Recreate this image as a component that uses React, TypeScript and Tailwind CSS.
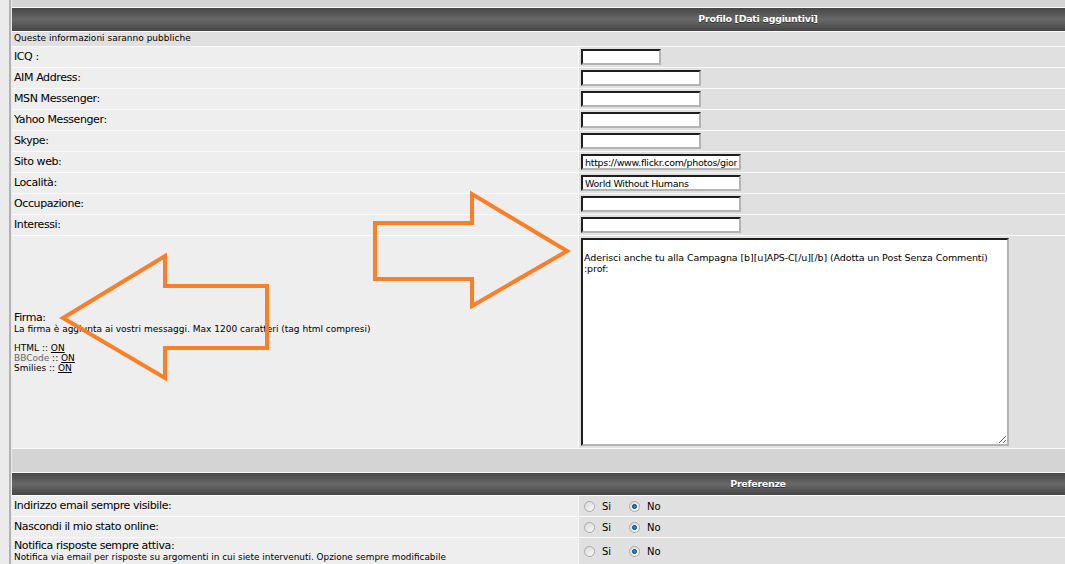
import React from "react";

const font = "font-['DejaVu_Sans','Liberation_Sans',sans-serif]";

const Header = ({ title, h }: { title: string; h: string }) => (
  <div
    className={`flex ${h} items-center justify-center bg-linear-to-b from-[#474747] via-[#686868] to-[#464646] text-[9.5px] font-bold tracking-[-0.3px] text-white [text-shadow:0_1px_0_#333]`}
  >
    {title}
  </div>
);

const TextInput = ({ w, value = "" }: { w: string; value?: string }) => (
  <input
    type="text"
    defaultValue={value}
    className={`${w} h-[16px] border-2 border-[#b4b4b4] border-t-[#1e1e1e] border-l-[#1e1e1e] bg-white px-[2px] text-[9.5px] tracking-[-0.3px] text-black outline-none ${font}`}
  />
);

const Row = ({
  label,
  children,
  h = "h-[20px]",
}: {
  label: React.ReactNode;
  children?: React.ReactNode;
  h?: string;
}) => (
  <div className={`flex gap-px ${h}`}>
    <div className="flex w-[566px] shrink-0 flex-col justify-center bg-[#eeeeee] pl-[2px] text-[11px] tracking-[-0.4px] text-black">
      {label}
    </div>
    <div className="flex flex-1 items-center bg-[#e0e0e0] pl-[2px]">{children}</div>
  </div>
);

const Radio = ({ checked }: { checked?: boolean }) => (
  <span className="flex h-[11px] w-[11px] shrink-0 items-center justify-center rounded-full border border-[#a9a9a9] bg-linear-to-br from-[#d8d8d8] to-[#fbfbfb]">
    {checked && <span className="h-[5px] w-[5px] rounded-full border border-[#0d3d66] bg-[#2a86c8]" />}
  </span>
);

const YesNo = () => (
  <div className="flex items-center pl-[3px] text-[10px] text-black">
    <Radio />
    <span className="ml-[7px] w-[27px]">Si</span>
    <Radio checked />
    <span className="ml-[7px]">No</span>
  </div>
);

export default function App() {
  return (
    <div className={`relative h-[564px] w-full overflow-hidden bg-[#ebebeb] ${font}`}>
      <div className="ml-[9px] w-[1495px] border-l-2 border-[#b2b2b2] pl-px">
        <div className="flex w-[1492px] flex-col gap-px bg-[#fafafa]">
          <div className="h-[7px] bg-[#d4d4d4]" />
          <Header h="h-[23px]" title="Profilo [Dati aggiuntivi]" />
          <div className="flex h-[14px] items-center bg-[#e0e0e0] pl-[2px] text-[9px] text-black">
            Queste informazioni saranno pubbliche
          </div>
          <Row label="ICQ :">
            <TextInput w="w-[80px]" />
          </Row>
          <Row label="AIM Address:">
            <TextInput w="w-[120px]" />
          </Row>
          <Row label="MSN Messenger:">
            <TextInput w="w-[120px]" />
          </Row>
          <Row label="Yahoo Messenger:">
            <TextInput w="w-[120px]" />
          </Row>
          <Row label="Skype:">
            <TextInput w="w-[120px]" />
          </Row>
          <Row label="Sito web:">
            <TextInput w="w-[160px]" value="https://www.flickr.com/photos/giorgio" />
          </Row>
          <Row label="Località:">
            <TextInput w="w-[160px]" value="World Without Humans" />
          </Row>
          <Row label="Occupazione:">
            <TextInput w="w-[160px]" />
          </Row>
          <Row label="Interessi:">
            <TextInput w="w-[160px]" />
          </Row>
          <Row
            h="h-[212px]"
            label={
              <div className="tracking-normal">
                <div className="text-[11px] leading-[12px] tracking-[-0.4px]">Firma:</div>
                <div className="text-[9px] leading-[10px]">
                  La firma è aggiunta ai vostri messaggi. Max 1200 caratteri (tag html compresi)
                </div>
                <div className="mt-[9px] text-[9px] leading-[10px]">
                  <div>
                    HTML :: <span className="underline">ON</span>
                  </div>
                  <div>
                    <span className="text-[#666666]">BBCode</span> :: <span className="underline">ON</span>
                  </div>
                  <div>
                    Smilies :: <span className="underline">ON</span>
                  </div>
                </div>
              </div>
            }
          >
            <textarea
              defaultValue={
                "\nAderisci anche tu alla Campagna [b][u]APS-C[/u][/b] (Adotta un Post Senza Commenti)\n:prof:"
              }
              className={`h-[208px] w-[428px] resize border-2 border-[#b4b4b4] border-t-[#1e1e1e] border-l-[#1e1e1e] bg-white px-px pt-px text-[9.5px] leading-[11px] tracking-[-0.1px] text-black outline-none ${font}`}
            />
          </Row>
          <div className="h-[23px] bg-[#d4d4d4]" />
          <Header h="h-[22px]" title="Preferenze" />
          <Row label="Indirizzo email sempre visibile:">
            <YesNo />
          </Row>
          <Row label="Nascondi il mio stato online:">
            <YesNo />
          </Row>
          <Row
            h="h-[26px]"
            label={
              <>
                <div className="leading-[12px]">Notifica risposte sempre attiva:</div>
                <div className="text-[8.9px] leading-[10px] tracking-normal">
                  Notifica via email per risposte su argomenti in cui siete intervenuti. Opzione sempre modificabile
                </div>
              </>
            }
          >
            <YesNo />
          </Row>
        </div>
      </div>

      {/* orange annotation arrows */}
      <svg
        className="pointer-events-none absolute left-0 top-0"
        width="1065"
        height="564"
        viewBox="0 0 1065 564"
      >
        <polygon
          points="375,223 472,223 472,194 567,251 472,306 472,279 375,279"
          fill="none"
          stroke="#fb7f26"
          strokeWidth="4"
        />
        <polygon
          points="63,318 165,256 165,286 267,286 267,348 165,348 165,378"
          fill="none"
          stroke="#fb7f26"
          strokeWidth="4"
        />
      </svg>
    </div>
  );
}
